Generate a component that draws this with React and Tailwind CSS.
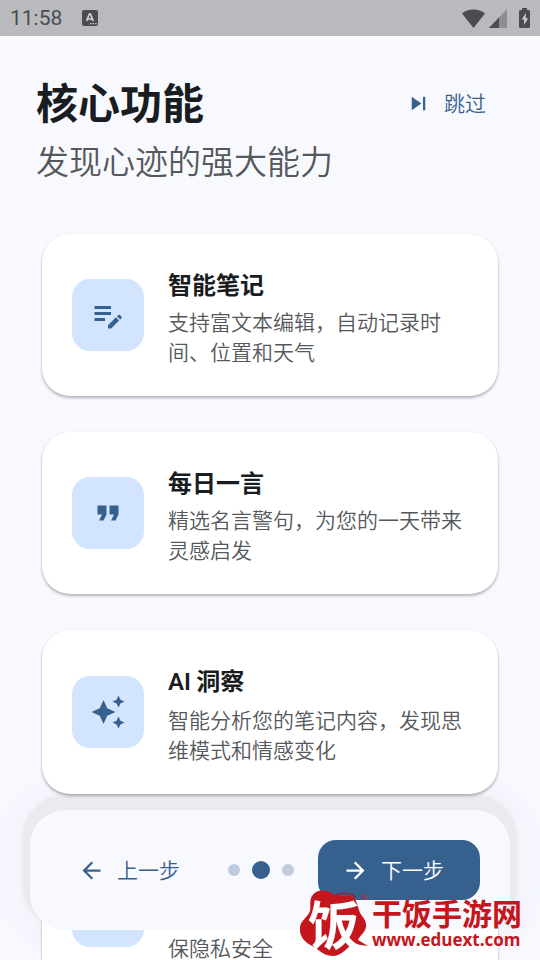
import {
  MdArrowBack,
  MdArrowForward,
  MdAutoAwesome,
  MdFormatQuote,
  MdLock,
  MdSkipNext,
} from 'react-icons/md'

// filled variant of the note icon, with a solid pencil
function NoteIcon({ size }) {
  return (
    <svg width={size} height={size} viewBox="0 0 24 24" fill="currentColor" aria-hidden="true">
      <path d="M3 10h11v2H3zM3 8h11V6H3zM3 16h7v-2H3z" />
      <path d="m18.010 12.870.71-.71a1 1 0 0 1 1.410 0l.71.71a1 1 0 0 1 0 1.410l-.71.71zM17.300 13.580l-5.300 5.300V21h2.120l5.300-5.300z" />
    </svg>
  )
}

const features = [
  { icon: NoteIcon, title: '智能笔记', text: '支持富文本编辑，自动记录时间、位置和天气' },
  { icon: MdFormatQuote, title: '每日一言', text: '精选名言警句，为您的一天带来灵感启发' },
  {
    icon: MdAutoAwesome,
    title: (
      <>
        <span className="font-['Roboto'] font-semibold">AI</span> 洞察
      </>
    ),
    text: '智能分析您的笔记内容，发现思维模式和情感变化',
  },
  { icon: MdLock, title: '隐私保护', text: '所有数据都存储在您的设备中确保隐私安全' },
]

function StatusBar() {
  return (
    <div className="flex h-9 items-center bg-[#b9babe] px-[10px] text-[#4b4c4f]">
      <span className="font-['Roboto'] text-[21px] leading-9">11:58</span>
      <svg className="ml-5 h-4 w-4" viewBox="0 0 16 16" aria-hidden="true">
        <rect width="16" height="16" rx="2" fill="currentColor" />
        <path d="M4.6 11 7.3 4h1.2l2.7 7M5.6 9h4.6" fill="none" stroke="#d2d3d6" strokeWidth="1.7" />
        <path d="M8 13.6h1.4M10.6 13.6H12M13.2 13.6h1.4" stroke="#d2d3d6" strokeWidth="1.2" />
      </svg>
      <div className="ml-auto flex items-center">
        <svg className="h-[19px] w-[23px]" viewBox="0 0 23 19" fill="currentColor" aria-hidden="true">
          <path d="M11.5 19 0 4.6C3 2.1 7 .6 11.5 .6S20 2.1 23 4.6Z" />
        </svg>
        <svg className="ml-1 h-[19px] w-[18px]" viewBox="0 0 18 19" fill="currentColor" aria-hidden="true">
          <path d="M18 0v19H0Z" opacity=".4" />
          <path d="M10 8.4V19H0Z" />
        </svg>
        <svg className="ml-3 h-5 w-[11px]" viewBox="0 0 11 20" aria-hidden="true">
          <path d="M3 0h5v2h1.5A1.5 1.5 0 0 1 11 3.5v15A1.5 1.5 0 0 1 9.5 20h-8A1.5 1.5 0 0 1 0 18.5v-15A1.5 1.5 0 0 1 1.5 2H3Z" fill="currentColor" />
          <path d="M6.8 5 2.7 11.4h2.4V17l4-6.8H6.8Z" fill="#c9cace" />
        </svg>
      </div>
    </div>
  )
}

function FeatureCard({ icon: Icon, title, text }) {
  return (
    <li className="flex items-center gap-6 rounded-[28px] bg-white p-[30px] shadow-[0_2px_3px_rgba(0,0,0,0.28),0_0_2px_rgba(0,0,0,0.05)]">
      <div className="flex h-[72px] w-[72px] shrink-0 items-center justify-center rounded-[18px] bg-[#d3e4ff] text-[#36618e]">
        <Icon size={36} />
      </div>
      <div className="min-w-0 flex-1">
        <h2 className="mb-[2px] text-2xl leading-10 font-semibold text-[#191c20]">{title}</h2>
        <p className="text-[21px] leading-[30px] font-[350] text-[#55585c]">{text}</p>
      </div>
    </li>
  )
}

function BottomNav() {
  return (
    <nav className="absolute inset-x-[30px] bottom-[30px] z-20 flex items-center justify-between rounded-[36px] bg-[#f8f9ff] p-[30px] text-[21px] font-[350]">
      <button type="button" className="flex h-[60px] items-center gap-3 pl-[18px] pr-6 text-[#36618e]">
        <MdArrowBack size={27} />
        上一步
      </button>
      <div className="flex items-center gap-3">
        <span className="h-3 w-3 rounded-full bg-[#bfcbdf]" />
        <span className="h-[18px] w-[18px] rounded-full bg-[#36618e]" />
        <span className="h-3 w-3 rounded-full bg-[#bfcbdf]" />
      </div>
      <button type="button" className="flex h-[60px] items-center gap-3 rounded-[18px] bg-[#36618e] pl-6 pr-9 text-white">
        <MdArrowForward size={27} />
        下一步
      </button>
    </nav>
  )
}

function Watermark() {
  return (
    <div className="pointer-events-none absolute right-[18px] bottom-1 z-30 flex items-center gap-1 text-[#c4161c]">
      <div className="relative flex h-[66px] w-[68px] items-center justify-center">
        <svg className="absolute inset-0 h-full w-full" viewBox="0 0 68 66" aria-hidden="true">
          <path
            d="M12 6C16 0 24 -1 31 3c6 4 12 2 20 3 6 3 6 9 8 14 2 7 8 9 7 17-1 6-6 8-8 13l10 6-14-2c-6 1-10 11-20 12C23 66 20 60 12 56 4 52-1 46 0 37c1-7 8-10 10-16 1-5-1-10 2-15Z"
            fill="#c4161c"
          />
          <path d="M36 5c7-3 16-2 20 3" fill="none" stroke="#8f2437" strokeWidth="1.5" />
        </svg>
        <span className="relative text-[52px] leading-[66px] font-bold text-white">饭</span>
      </div>
      <div>
        <p className="text-[30px] leading-[34px] font-bold">干饭手游网</p>
        <p className="font-['Open_Sans'] text-[17px] leading-[22px] font-bold">www.eduext.com</p>
      </div>
      <span className="absolute top-1 left-[61px] font-['Roboto'] text-[8px] leading-none">®</span>
    </div>
  )
}

export default function App() {
  return (
    <div
      lang="zh-CN"
      className="relative h-screen overflow-hidden bg-[#f8f9ff] font-['Noto_Sans_CJK_SC',sans-serif]"
    >
      <StatusBar />
      <header className="flex items-start justify-between px-9 pt-[38px]">
        <div>
          <h1 className="text-[42px] leading-[54px] font-semibold text-[#191c20]">核心功能</h1>
          <p className="mt-2 text-[33px] leading-[48px] font-[350] text-[#55585c]">发现心迹的强大能力</p>
        </div>
        <button
          type="button"
          className="flex h-[58px] items-center gap-3 px-[18px] text-[21px] font-[350] text-[#36618e]"
        >
          <MdSkipNext size={27} />
          跳过
        </button>
      </header>

      {/* soft halo of the bottom bar, kept under the cards */}
      <div className="absolute inset-x-[30px] bottom-[30px] h-[120px] rounded-[36px] shadow-[0_-8px_3px_8px_#ebebef,0_-4px_10px_28px_#f4f5fd]" />

      <ul className="relative z-10 mt-[50px] flex flex-col gap-9 px-[42px]">
        {features.map((feature) => (
          <FeatureCard key={feature.text} {...feature} />
        ))}
      </ul>

      <BottomNav />
      <Watermark />
    </div>
  )
}
